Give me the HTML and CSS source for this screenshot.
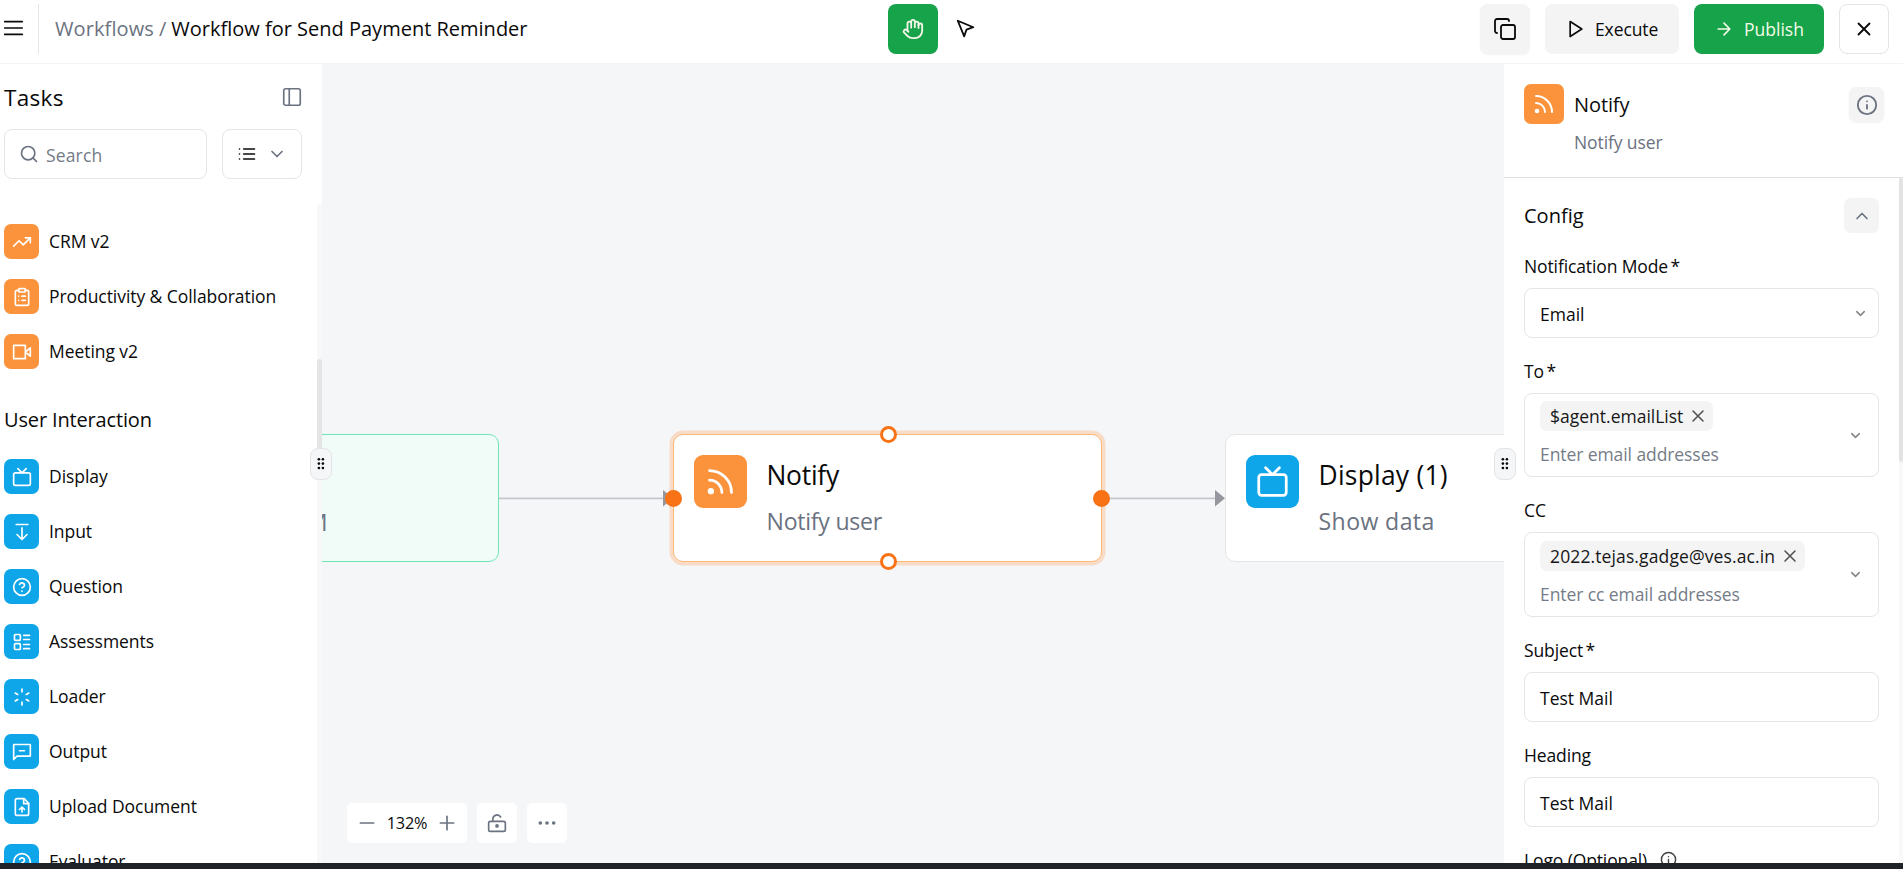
FILE: index.html
```html
<!DOCTYPE html>
<html lang="en">
<head>
<meta charset="utf-8">
<title>Workflow for Send Payment Reminder</title>
<link rel="stylesheet" href="styles.css">
</head>
<body>
<svg class="sprite" aria-hidden="true">
  <symbol id="menu" viewBox="0 0 24 24"><path d="M3 5h19M3 12h19M3 19h19"/></symbol>
  <symbol id="hand" viewBox="0 0 24 24"><path d="M18 11V6a2 2 0 0 0-4 0M14 10V4a2 2 0 0 0-4 0v2M10 10.500V6a2 2 0 0 0-4 0v8"/><path d="M18 8a2 2 0 1 1 4 0v6a8 8 0 0 1-8 8h-2c-2.800 0-4.500-.860-5.990-2.340l-3.600-3.600a2 2 0 0 1 2.830-2.820L7 15"/></symbol>
  <symbol id="pointer" viewBox="0 0 24 24"><path d="m3 3 7.070 16.970 2.510-7.390 7.390-2.510L3 3z"/></symbol>
  <symbol id="copy" viewBox="0 0 24 24"><rect x="8" y="8" width="14" height="14" rx="2"/><path d="M4 16c-1.100 0-2-.900-2-2V4c0-1.100.900-2 2-2h10c1.100 0 2 .900 2 2"/></symbol>
  <symbol id="play" viewBox="0 0 24 24"><path d="M5 3l14 9-14 9V3z"/></symbol>
  <symbol id="arrow" viewBox="0 0 24 24"><path d="M5 12h14M12 5l7 7-7 7"/></symbol>
  <symbol id="x" viewBox="0 0 24 24"><path d="M18 6 6 18M6 6l12 12"/></symbol>
  <symbol id="panel" viewBox="0 0 24 24"><rect x="3" y="3" width="18" height="18" rx="2"/><path d="M9 3v18"/></symbol>
  <symbol id="search" viewBox="0 0 24 24"><circle cx="11" cy="11" r="8"/><path d="m21 21-4.300-4.300"/></symbol>
  <symbol id="list" viewBox="0 0 24 24"><path d="M8 6h13M8 12h13M8 18h13M3 6h.010M3 12h.010M3 18h.010"/></symbol>
  <symbol id="down" viewBox="0 0 24 24"><path d="m6 9 6 6 6-6"/></symbol>
  <symbol id="up" viewBox="0 0 24 24"><path d="m18 15-6-6-6 6"/></symbol>
  <symbol id="trend" viewBox="0 0 24 24"><path d="m22 7-8.500 8.500-5-5L2 17"/><path d="M16 7h6v6"/></symbol>
  <symbol id="clipboard" viewBox="0 0 24 24"><rect x="8" y="2" width="8" height="4" rx="1"/><path d="M16 4h2a2 2 0 0 1 2 2v14a2 2 0 0 1-2 2H6a2 2 0 0 1-2-2V6a2 2 0 0 1 2-2h2M12 11h4M12 16h4M8 11h.010M8 16h.010"/></symbol>
  <symbol id="video" viewBox="0 0 24 24"><path d="M2 4h14v16H2zM22 7l-6 5 6 5z"/></symbol>
  <symbol id="tv" viewBox="0 0 24 24"><rect x="2" y="7" width="20" height="15" rx="2"/><path d="m17 2-5 5-5-5"/></symbol>
  <symbol id="input" viewBox="0 0 24 24"><path d="M19 3H5M12 21V7M6 15l6 6 6-6"/></symbol>
  <symbol id="help" viewBox="0 0 24 24"><circle cx="12" cy="12" r="10"/><path d="M9.090 9a3 3 0 0 1 5.830 1c0 2-3 3-3 3M12 17h.010"/></symbol>
  <symbol id="layout" viewBox="0 0 24 24"><rect x="3" y="3" width="7" height="7" rx="1"/><rect x="3" y="14" width="7" height="7" rx="1"/><path d="M14 4h7M14 9h7M14 15h7M14 20h7"/></symbol>
  <symbol id="loader" viewBox="0 0 24 24"><path d="M12 2.500v3.500M12 18v3.500M3.800 7.300l3 1.700M17.200 15l3 1.700M3.800 16.700l3-1.700M17.200 9l3-1.700"/></symbol>
  <symbol id="message" viewBox="0 0 24 24"><path d="M22 16.500a.500.500 0 0 1-.500.500H6l-4 4V3.500a.500.500 0 0 1 .500-.500h19a.500.500 0 0 1 .500.500zM9 10.500h6"/></symbol>
  <symbol id="upload" viewBox="0 0 24 24"><path d="M14.500 2H6a2 2 0 0 0-2 2v16a2 2 0 0 0 2 2h12a2 2 0 0 0 2-2V7.500L14.500 2z"/><path d="M14 2v6h6M12 12v6M15 15l-3-3-3 3"/></symbol>
  <symbol id="rss" viewBox="0 0 24 24"><path d="M4 11a9 9 0 0 1 9 9M4 4a16 16 0 0 1 16 16"/><circle cx="5" cy="19" r="1.300" fill="currentColor"/></symbol>
  <symbol id="info" viewBox="0 0 24 24"><circle cx="12" cy="12" r="10"/><path d="M12 16v-4M12 8h.010"/></symbol>
  <symbol id="grip" viewBox="0 0 10 16"><g fill="currentColor" stroke="none"><circle cx="2" cy="2.500" r="1.500"/><circle cx="2" cy="7.500" r="1.500"/><circle cx="2" cy="12.500" r="1.500"/><circle cx="6.600" cy="2.500" r="1.500"/><circle cx="6.600" cy="7.500" r="1.500"/><circle cx="6.600" cy="12.500" r="1.500"/></g></symbol>
  <symbol id="minus" viewBox="0 0 24 24"><path d="M4 12h16"/></symbol>
  <symbol id="plus" viewBox="0 0 24 24"><path d="M4 12h16M12 4v16"/></symbol>
  <symbol id="unlock" viewBox="0 0 24 24"><rect x="2" y="10" width="20" height="12" rx="2"/><path d="M7 10V7.200a5 5 0 0 1 9.300-2.400"/><circle cx="12" cy="15.500" r="1.200" fill="currentColor"/></symbol>
  <symbol id="dots" viewBox="0 0 24 24"><g fill="currentColor"><circle cx="4" cy="12" r="1.200"/><circle cx="12" cy="12" r="1.200"/><circle cx="20" cy="12" r="1.200"/></g></symbol>
</svg>

<div class="app">
  <header class="topbar">
    <svg class="icon menu-icon"><use href="#menu"/></svg>
    <span class="topbar-rule"></span>
    <nav class="crumbs"><span class="crumb-root">Workflows</span><span class="crumb-sep">/</span><span>Workflow for Send Payment Reminder</span></nav>
    <div class="tools">
      <button class="tool tool-active"><svg class="icon s22"><use href="#hand"/></svg></button>
      <button class="tool tool-plain"><svg class="icon s22"><use href="#pointer"/></svg></button>
    </div>
    <div class="actions">
      <button class="btn btn-icon"><svg class="icon s25"><use href="#copy"/></svg></button>
      <button class="btn btn-execute"><svg class="icon s20"><use href="#play"/></svg>Execute</button>
      <button class="btn btn-publish"><svg class="icon s20"><use href="#arrow"/></svg>Publish</button>
      <button class="btn btn-close"><svg class="icon s22"><use href="#x"/></svg></button>
    </div>
  </header>

  <main class="workspace">
    <aside class="sidebar">
      <div class="sidebar-head"><h2 class="sidebar-title">Tasks</h2><svg class="icon s22 muted thin"><use href="#panel"/></svg></div>
      <div class="filters">
        <div class="search"><svg class="icon s20 muted"><use href="#search"/></svg><span>Search</span></div>
        <div class="view-select"><svg class="icon s20"><use href="#list"/></svg><svg class="icon s20 muted"><use href="#down"/></svg></div>
      </div>
      <div class="task-scroll">
        <ul class="tasks">
          <li class="task"><span class="tile orange"><svg class="icon s20"><use href="#trend"/></svg></span><span>CRM v2</span></li>
          <li class="task"><span class="tile orange"><svg class="icon s20"><use href="#clipboard"/></svg></span><span>Productivity &amp; Collaboration</span></li>
          <li class="task"><span class="tile orange"><svg class="icon s20"><use href="#video"/></svg></span><span>Meeting v2</span></li>
        </ul>
        <h3 class="group-title">User Interaction</h3>
        <ul class="tasks">
          <li class="task"><span class="tile blue"><svg class="icon s20"><use href="#tv"/></svg></span><span>Display</span></li>
          <li class="task"><span class="tile blue"><svg class="icon s20"><use href="#input"/></svg></span><span>Input</span></li>
          <li class="task"><span class="tile blue"><svg class="icon s20"><use href="#help"/></svg></span><span>Question</span></li>
          <li class="task"><span class="tile blue"><svg class="icon s20"><use href="#layout"/></svg></span><span>Assessments</span></li>
          <li class="task"><span class="tile blue"><svg class="icon s20"><use href="#loader"/></svg></span><span>Loader</span></li>
          <li class="task"><span class="tile blue"><svg class="icon s20"><use href="#message"/></svg></span><span>Output</span></li>
          <li class="task"><span class="tile blue"><svg class="icon s20"><use href="#upload"/></svg></span><span>Upload Document</span></li>
          <li class="task"><span class="tile blue"><svg class="icon s20"><use href="#help"/></svg></span><span>Evaluator</span></li>
        </ul>
        <span class="scroll-track"><span class="scroll-thumb"></span></span>
      </div>
      <span class="grip grip-left"><svg class="grip-icon"><use href="#grip"/></svg></span>
    </aside>

    <section class="canvas">
      <svg class="edges" width="1182" height="799">
        <path d="M177 434.300H343M780 434.300H895" stroke="#c6c7cc" stroke-width="1.700"/>
        <path d="M341 426v16.500l10-8.250zM893 426v16.500l10-8.250z" fill="#96979e"/>
      </svg>
      <article class="node node-green"><p class="node-sub">M</p></article>
      <article class="node node-notify">
        <span class="node-tile orange"><svg class="icon s32"><use href="#rss"/></svg></span>
        <div class="node-text"><h4 class="node-title tight">Notify</h4><p class="node-sub tight">Notify user</p></div>
        <i class="port port-top"></i><i class="port port-bottom"></i><i class="port port-left"></i><i class="port port-right"></i>
      </article>
      <article class="node node-display">
        <span class="node-tile blue"><svg class="icon s32"><use href="#tv"/></svg></span>
        <div class="node-text"><h4 class="node-title">Display (1)</h4><p class="node-sub">Show data</p></div>
      </article>
      <div class="zoombar">
        <div class="zoom-group"><svg class="icon s20"><use href="#minus"/></svg><span class="zoom-value">132%</span><svg class="icon s20"><use href="#plus"/></svg></div>
        <div class="zoom-btn"><svg class="icon s20"><use href="#unlock"/></svg></div>
        <div class="zoom-btn"><svg class="icon s20"><use href="#dots"/></svg></div>
      </div>
    </section>

    <aside class="inspector">
      <span class="grip grip-right"><svg class="grip-icon"><use href="#grip"/></svg></span>
      <div class="inspector-head">
        <span class="head-tile orange"><svg class="icon s25"><use href="#rss"/></svg></span>
        <div class="head-text"><h3 class="head-title">Notify</h3><p class="head-sub">Notify user</p></div>
        <span class="square"><svg class="icon s22 muted"><use href="#info"/></svg></span>
      </div>
      <div class="inspector-body">
        <div class="section-head"><h3 class="section-title">Config</h3><span class="square"><svg class="icon s20 muted"><use href="#up"/></svg></span></div>
        <div class="field"><label class="label">Notification Mode<span class="req">*</span></label>
          <div class="control"><span>Email</span><svg class="icon s15 gray"><use href="#down"/></svg></div></div>
        <div class="field"><label class="label">To<span class="req">*</span></label>
          <div class="control multi"><div class="multi-main"><span class="chip">$agent.emailList<svg class="icon s20"><use href="#x"/></svg></span><span class="placeholder">Enter email addresses</span></div><svg class="icon s15 gray"><use href="#down"/></svg></div></div>
        <div class="field"><label class="label">CC</label>
          <div class="control multi cc"><div class="multi-main"><span class="chip chip-email">2022.tejas.gadge@ves.ac.in<svg class="icon s20"><use href="#x"/></svg></span><span class="placeholder">Enter cc email addresses</span></div><svg class="icon s15 gray"><use href="#down"/></svg></div></div>
        <div class="field"><label class="label">Subject<span class="req">*</span></label><div class="control"><span>Test Mail</span></div></div>
        <div class="field"><label class="label">Heading</label><div class="control"><span>Test Mail</span></div></div>
        <div class="field"><label class="label">Logo (Optional)<svg class="icon label-info"><use href="#info"/></svg></label></div>
        <span class="body-track"><span class="body-thumb"></span></span>
      </div>
    </aside>
  </main>
  <footer class="bottom-edge"></footer>
</div>
</body>
</html>
```

FILE: styles.css
```css
* { box-sizing: border-box; }
body { margin: 0; overflow: hidden; font-family: "Open Sans", "Noto Sans", sans-serif; font-size: 17.5px; color: #0a0a0a; background: #fff; }
h2, h3, h4, p, ul { margin: 0; padding: 0; font-weight: 400; }
ul { list-style: none; }
button { font: inherit; color: inherit; border: 0; padding: 0; background: none; }
.sprite { position: absolute; width: 0; height: 0; }

.icon { display: block; flex: none; width: 20px; height: 20px; fill: none; stroke: currentColor; stroke-width: 2; stroke-linecap: round; stroke-linejoin: round; }
.s15 { width: 15px; height: 15px; }
.s20 { width: 20px; height: 20px; }
.s22 { width: 22px; height: 22px; }
.s25 { width: 24px; height: 24px; }
.s32 { width: 33px; height: 33px; }
.thin { stroke-width: 1.8; }
.muted { color: #6b7280; }
.gray { color: #858585; }
.orange { background: #fb923c; color: #fff; }
.blue { background: #0ea5e9; color: #fff; }

.app { display: flex; flex-direction: column; width: 1903px; height: 869px; }

/* Top bar */
.topbar { flex: none; display: grid; grid-template-columns: 33px 19px 834px 1fr auto; align-items: start; height: 64px; padding: 4px 14px 0 2px; border-bottom: 1px solid #f4f4f5; }
.topbar > * { height: 50px; }
.topbar .menu-icon { width: 22px; height: 22px; margin-top: 13px; stroke-width: 1.9; }
.topbar-rule { width: 1px; margin-left: 3px; background: #e5e5e5; }
.crumbs { display: flex; align-items: center; font-size: 20px; padding: 0 0 1px 1px; }
.crumb-root, .crumb-sep { color: #6b7280; }
.crumb-root { letter-spacing: .1px; }
.crumb-sep { margin: 0 5px; }
.tools { display: flex; }
.tool { display: flex; align-items: center; justify-content: center; width: 50px; height: 50px; border-radius: 8px; }
.tool-active { background: #16a34a; color: #f5f5e8; }
.tool-plain { margin-left: 3px; }
.actions { display: flex; gap: 15px; }
.btn { display: flex; align-items: center; height: 50px; border-radius: 8px; background: #f4f4f5; font-weight: 500; }
.btn-icon, .btn-close { width: 50px; justify-content: center; padding: 0; }
.btn-icon { box-shadow: 0 1px 2px rgba(0, 0, 0, .05); }
.btn-icon .icon { stroke-width: 1.8; }
.btn-execute { width: 134px; padding-left: 21px; gap: 9px; letter-spacing: -.1px; }
.btn-publish { width: 130px; padding-left: 20px; gap: 10px; background: #16a34a; color: #f5fbe8; }
.btn-close { background: #fff; border: 1px solid #e5e5e5; }

.workspace { flex: none; display: flex; height: 799px; }

/* Task sidebar */
.sidebar { position: relative; z-index: 2; flex: none; display: flex; flex-direction: column; width: 322px; background: #fff; }
.sidebar-head { display: flex; justify-content: space-between; align-items: center; height: 65px; padding: 1px 19px 0 4px; }
.sidebar-title { font-size: 22.5px; letter-spacing: .3px; }
.filters { display: flex; justify-content: space-between; padding: 0 20px 0 4px; }
.search, .view-select { display: flex; align-items: center; height: 50px; border: 1px solid #e5e5e5; border-radius: 8px; }
.search { width: 203px; padding-left: 14px; gap: 7px; color: #737b86; letter-spacing: .15px; }
.search span { padding-top: 1px; }
.view-select { width: 80px; padding: 0 14px; justify-content: space-between; }
.task-scroll { position: relative; flex: 1; min-height: 0; margin-top: 25px; padding: 20px 0 0 4px; overflow: hidden; }
.tasks { display: flex; flex-direction: column; gap: 20px; }
.task { display: flex; align-items: center; gap: 10px; height: 35px; letter-spacing: -.06px; line-height: 24px; }
.task span:last-child { padding-bottom: 1px; }
.tile { display: flex; align-items: center; justify-content: center; width: 35px; height: 35px; border-radius: 7px; }
.group-title { height: 90px; line-height: 101px; font-size: 20px; letter-spacing: -.15px; }
.scroll-track { position: absolute; top: 0; right: 0; width: 5px; height: 100%; background: #f8f8f8; }
.scroll-thumb { display: block; width: 5px; height: 106px; margin-top: 155px; border-radius: 3px; background: #e5e5e5; }
.grip { position: absolute; z-index: 5; top: 384px; display: flex; align-items: center; justify-content: center; width: 22px; height: 32px; border: 1px solid #e3e4e6; border-radius: 8px; background: #f5f6f8; color: #0a0a0a; }
.grip-left { right: -10px; }
.grip-right { left: -10px; }
.grip-icon { width: 9px; height: 14px; margin-left: 1px; }

/* Canvas */
.canvas { position: relative; flex: none; width: 1182px; overflow: hidden; background: #f5f6f8; }
.edges { position: absolute; left: 0; top: 0; }
.node { position: absolute; top: 370px; display: flex; height: 128px; border: 1px solid #e5e5e5; border-radius: 10px; background: #fff; }
.node-green { left: -252px; width: 429px; border: 1.500px solid #6ee7b7; background: #f1fbf8; justify-content: flex-end; padding: 69px 170px 0 0; }
.node-notify { left: 351px; width: 429px; padding: 20px; border: 1.500px solid #fdba74; box-shadow: 0 0 0 3.500px #f8dcc8; }
.node-display { left: 903px; width: 429px; padding: 20px; }
.node-tile { display: flex; align-items: center; justify-content: center; width: 53px; height: 53px; border-radius: 9px; }
.node-text { padding-left: 19.500px; }
.node-title { height: 40px; line-height: 41px; font-size: 26.4px; letter-spacing: .25px; }
.node-sub { height: 36px; line-height: 36px; margin-top: 8px; font-size: 23.1px; letter-spacing: .4px; color: #6b7280; }
.node-green .node-sub { margin: 0; }
.tight { letter-spacing: -.25px; }
.port { position: absolute; width: 17px; height: 17px; border-radius: 50%; border: 3px solid #f97316; background: #fff; }
.port-top { left: 206px; top: -9px; }
.port-bottom { left: 206px; bottom: -9px; }
.port-left { left: -9px; top: 55px; background: #f97316; }
.port-right { right: -9px; top: 55px; background: #f97316; }
.zoombar { position: absolute; left: 25px; top: 739px; display: flex; gap: 10px; color: #6b7280; }
.zoom-group, .zoom-btn { display: flex; align-items: center; justify-content: center; height: 40px; border-radius: 5px; background: #fff; }
.zoom-group { width: 120px; justify-content: space-between; padding: 0 10px; }
.zoom-value { font-size: 16.250px; letter-spacing: -.2px; color: #0a0a0a; }
.zoom-btn { width: 40px; }

/* Inspector */
.inspector { position: relative; z-index: 2; flex: none; display: flex; flex-direction: column; width: 399px; background: #fff; }
.inspector-head { flex: none; display: flex; height: 114px; padding: 20px 19px 0 20px; border-bottom: 1px solid #e0e0e0; }
.head-tile { display: flex; align-items: center; justify-content: center; width: 40px; height: 40px; border-radius: 7px; }
.head-text { flex: 1; padding-left: 10px; }
.head-title { height: 40px; line-height: 41px; font-size: 20px; letter-spacing: -.1px; }
.head-sub { height: 38px; line-height: 37px; color: #6b7280; letter-spacing: -.1px; }
.square { display: flex; align-items: center; justify-content: center; width: 35px; height: 35px; border-radius: 7px; background: #f4f4f5; }
.inspector-head .square { margin-top: 3px; padding-left: 1px; box-shadow: 0 1px 2px rgba(0, 0, 0, .05); }
.inspector-body { position: relative; flex: 1; min-height: 0; padding: 20px 24px 0 20px; overflow: hidden; }
.section-head { display: flex; justify-content: space-between; align-items: center; height: 35px; margin-bottom: 20px; }
.section-title { font-size: 20px; padding-bottom: 1px; }
.field { margin-bottom: 20px; }
.label { display: flex; height: 35px; line-height: 26px; letter-spacing: -.12px; }
.req { margin-left: 2.500px; }
.label-info { width: 17px; height: 17px; margin: 4px 0 0 13px; color: #404040; }
.control { display: flex; align-items: center; justify-content: space-between; height: 50px; padding: 0 10px 0 15px; border: 1px solid #e5e5e5; border-radius: 8px; }
.control > span { padding-top: 1px; }
.control .gray { stroke-width: 2.4; }
.multi { height: 84px; padding-right: 15px; }
.cc { height: 85px; }
.multi-main { display: flex; flex-direction: column; align-items: flex-start; gap: 8px; }
.chip { display: flex; align-items: center; height: 30px; padding: 0 5px 0 10px; gap: 5px; border-radius: 7px; background: #f4f4f5; color: #171717; }
.chip .icon { color: #525252; stroke-width: 1.9; }
.chip-email { letter-spacing: .12px; }
.placeholder { height: 30px; line-height: 30px; color: #757c87; letter-spacing: -.08px; }
.body-track { position: absolute; top: 0; right: 0; width: 4px; height: 100%; background: #f8f8f8; }
.body-thumb { display: block; height: 284px; border-radius: 2px; background: #e3e3e3; }

.bottom-edge { flex: none; height: 6px; background: #1f2327; }
```
